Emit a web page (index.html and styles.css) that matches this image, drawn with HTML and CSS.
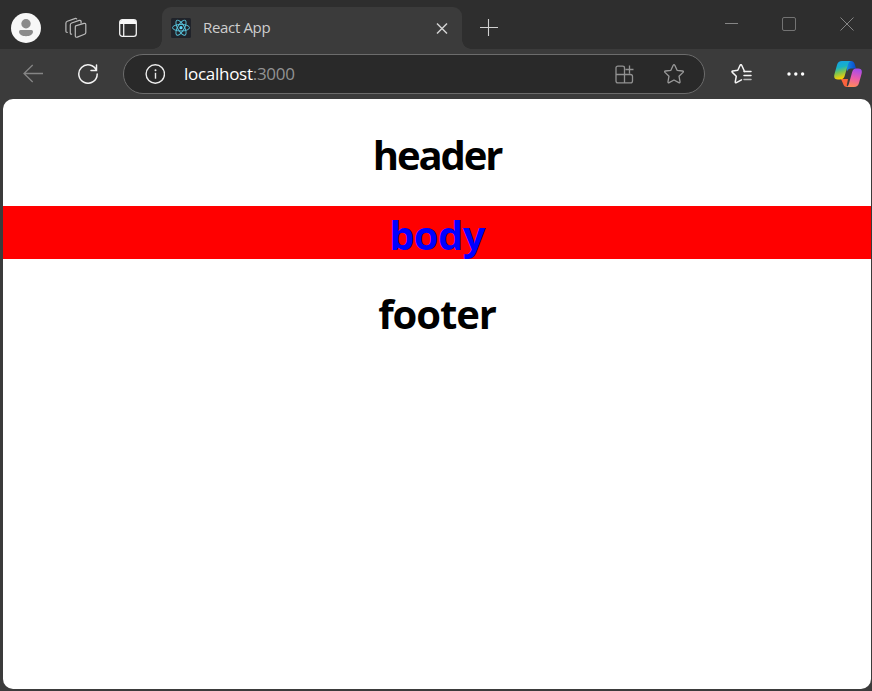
FILE: index.html
```html
<!DOCTYPE html>
<html lang="en">
<head>
<meta charset="utf-8">
<title>React App</title>
<link rel="stylesheet" href="styles.css">
</head>
<body>
<div class="window">
  <div class="tabstrip">
    <svg class="avatar" width="30" height="30" viewBox="0 0 30 30"><circle cx="15" cy="15" r="15" fill="#f7f7f7"/><circle cx="15" cy="10.700" r="4.700" fill="#8b8b8b"/><path d="M9.500 17h11q1.500 0 1.500 1.500c0 3-3 4.700-7 4.700s-7-1.700-7-4.700q0-1.500 1.500-1.500z" fill="#8b8b8b"/></svg>
    <svg class="workspaces" width="22" height="22" viewBox="0 0 22 22" fill="none" stroke="#bababa" stroke-width="1.200" stroke-linejoin="round" stroke-linecap="round"><path d="M10.600 8.800l8.400-2.400q1.800-.4 1.800 1.300v7.800q0 1.400-1.300 1.800l-7.200 2.800q-2 .6-2-1.300v-8.300q0-1.300.3-1.700z"/><path d="M6.600 17.200q-1.300.2-1.300-1.200V8q0-1.500 1.400-2l7.500-2.600q1.300-.4 1.900.7v2"/><path d="M2.200 15.400q-1.300 0-1.300-1.200V6.300q0-1.500 1.400-2l7.500-2.700q1.200-.4 1.900.3"/></svg>
    <svg class="vertical-tabs" width="18" height="18" viewBox="0 0 18 18"><rect x=".7" y=".7" width="16.600" height="16.600" rx="2.600" fill="none" stroke="#f2f2f2" stroke-width="1.300"/><path d="M1 5V3q0-2 2-2h12q2 0 2 2v2z" fill="#f8f8f8"/><path d="M4.700 5v12" stroke="#eee" stroke-width="1.300"/></svg>
    <div class="tab">
      <svg width="20" height="20" viewBox="0 0 20 20"><rect width="20" height="20" rx="1.500" fill="#20232a"/><g fill="none" stroke="#58c4dc" stroke-width=".95"><ellipse cx="10" cy="9.700" rx="8.500" ry="3.300"/><ellipse cx="10" cy="9.700" rx="8.500" ry="3.300" transform="rotate(60 10 9.700)"/><ellipse cx="10" cy="9.700" rx="8.500" ry="3.300" transform="rotate(120 10 9.700)"/></g><circle cx="10" cy="9.700" r="1.600" fill="#61dafb"/></svg>
      <span class="tab-title">React App</span>
      <svg width="12" height="12" viewBox="0 0 12 12" stroke="#d2d2d2" stroke-width="1.500"><path d="M1 1.500l10 10M11 1.500l-10 10"/></svg>
    </div>
    <svg class="new-tab" width="18" height="18" viewBox="0 0 18 18" stroke="#d0d0d0" stroke-width="1.100"><path d="M0 9.500h18M8.500 1v17"/></svg>
    <div class="controls">
      <svg width="13" height="14" viewBox="0 0 13 14"><path d="M0 6.500h13" stroke="#858585"/></svg>
      <svg width="14" height="14" viewBox="0 0 14 14"><rect x=".5" y=".5" width="13" height="13" rx="1.500" fill="none" stroke="#737373"/></svg>
      <svg width="14" height="14" viewBox="0 0 14 14"><path d="M.5.5l13 13M13.500.5l-13 13" stroke="#858585"/></svg>
    </div>
  </div>
  <div class="toolbar">
    <svg class="back" width="20" height="20" viewBox="0 0 20 20" fill="none" stroke="#858585" stroke-width="1.300"><path d="M20 9.500H1M9.700 1L1 9.500l8.700 8.500"/></svg>
    <svg class="reload" width="20" height="20" viewBox="0 0 20 20" fill="none" stroke="#f3f3f3" stroke-width="1.500" stroke-linecap="round"><path d="M18.500 6.500A9.200 9.200 0 1 0 19.200 10M18.500 1v5.500H13"/></svg>
    <div class="address">
      <svg class="info" width="20" height="20" viewBox="0 0 20 20"><circle cx="10.300" cy="10" r="9.200" fill="none" stroke="#ececec" stroke-width="1.400"/><path d="M10.500 8.800v5.900" stroke="#ececec" stroke-width="1.400"/><circle cx="10.500" cy="6.200" r="1" fill="#ececec"/></svg>
      <span class="url">localhost<span class="port">:3000</span></span>
      <svg class="apps" width="19" height="19" viewBox="0 0 19 19" fill="none" stroke="#919191" stroke-width="1.300"><path d="M9.500 9.500V3q0-1.900-1.900-1.900H3Q1 1.100 1 3v13q0 1.900 2 1.900h12.500q2 0 2-1.900v-4.600q0-1.900-2-1.900zM1 9.500h8.500v8.400M14.500.5v8M10.500 4.500h8"/></svg>
      <svg class="star" width="20" height="20" viewBox="0 0 20 20" fill="none" stroke="#9a9a9a" stroke-width="1.300" stroke-linejoin="round"><path d="M9.200 1.300q.8-1.300 1.600 0l2.300 5 5.400.7q1.500.3.500 1.400l-4 3.800 1 5.500q.1 1.500-1.200.9L10 16l-4.800 2.600q-1.300.6-1.200-.9l1-5.500-4-3.800Q0 7.300 1.500 7l5.400-.7z"/></svg>
    </div>
    <svg class="favorites" width="21" height="20" viewBox="0 0 21 20" fill="none" stroke="#f5f5f5" stroke-width="1.500" stroke-linejoin="round" stroke-linecap="round"><path d="M10.500 15.800l-5.100 2.800q-1.300.6-1.100-.9l1-5.500-4-3.800Q.4 7.300 1.800 7l5-.7 2.300-5q.8-1.300 1.600 0L13 6.300l.7 1.200"/><path d="M13 7.500h7M13 11.500h7"/><path d="M13 15.500h7" stroke="#b8b8b8"/></svg>
    <svg class="more" width="18" height="4" viewBox="0 0 18 4" fill="#fff"><circle cx="2" cy="2" r="1.700"/><circle cx="8.800" cy="2" r="1.700"/><circle cx="15.600" cy="2" r="1.700"/></svg>
    <svg class="copilot" width="28" height="26" viewBox="0 0 28 26"><defs><linearGradient id="left" x2=".25" y2="1"><stop stop-color="#169cec"/><stop offset=".4" stop-color="#18b2c5"/><stop offset=".65" stop-color="#79c453"/><stop offset="1" stop-color="#ffd000"/></linearGradient><linearGradient id="right" x1=".6" x2=".4" y2="1"><stop stop-color="#a34cee"/><stop offset=".5" stop-color="#e95bae"/><stop offset="1" stop-color="#ff8a58"/></linearGradient><linearGradient id="top"><stop stop-color="#168ce7"/><stop offset="1" stop-color="#0849ca"/></linearGradient></defs><path d="M12 0h5q3 0 4 4l1 3.500h-5q-3 0-4 3z" fill="url(#top)"/><path d="M7 18h7l-1 5q-1 3 2 3h-2q-3 0-4-3.500z" fill="#fa623d"/><path d="M8 0h9q-2 0-3 3.500l-3.500 12Q9.500 18.500 6 18.500H4Q-1 18.500.5 13L3 4Q4 0 8 0z" fill="url(#left)"/><path d="M20 26h-8q2 0 3-3.500l3-11Q19 7.500 22 7.500h2q5 0 3.500 5.500L25 22q-1 4-5 4z" fill="url(#right)"/></svg>
  </div>
  <main class="page">
    <h1 class="header-title">header</h1>
    <h1 class="body-title">body</h1>
    <h1 class="footer-title">footer</h1>
  </main>
</div>
</body>
</html>
```
FILE: styles.css
```css
* { box-sizing: border-box; }
body {
  margin: 0;
  background: #3b3b3b;
  font-family: "Open Sans", "Noto Sans", sans-serif;
}
svg { display: block; flex: none; }
.window {
  display: flex;
  flex-direction: column;
  width: 872px;
  height: 691px;
  padding-bottom: 2px;
  overflow: hidden;
}
.tabstrip {
  display: flex;
  align-items: center;
  height: 49px;
  padding: 7px 18px 0 11px;
  background: #2e2e2e;
}
.avatar { margin-right: 24px; }
.workspaces { margin-right: 32px; }
.vertical-tabs { margin-right: 25px; }
.tab {
  position: relative;
  display: flex;
  align-items: center;
  width: 300px;
  height: 42px;
  padding: 0 14px 0 9px;
  border-radius: 9px 9px 0 0;
  background: #3b3b3b;
}
.tab::before, .tab::after {
  content: "";
  position: absolute;
  bottom: 0;
  width: 9px;
  height: 9px;
}
.tab::before {
  left: -9px;
  background: radial-gradient(circle at 0 0, transparent 8.5px, #3b3b3b 9px);
}
.tab::after {
  right: -9px;
  background: radial-gradient(circle at 100% 0, transparent 8.5px, #3b3b3b 9px);
}
.tab-title {
  flex: 1;
  margin-left: 12px;
  padding-bottom: 2px;
  color: #cecece;
  font-size: 15px;
  letter-spacing: -0.33px;
}
.new-tab { margin: 0 auto 2px 18px; }
.controls {
  display: flex;
  gap: 44px;
  margin-bottom: 9px;
}
.toolbar {
  display: flex;
  align-items: center;
  height: 50px;
  padding: 0 10px 0 23px;
}
.back { margin-right: 35px; }
.reload { margin-right: 25px; }
.address {
  display: flex;
  align-items: center;
  width: 583px;
  height: 40px;
  padding: 0 20px 0 21px;
  border: 1px solid #6c6c6c;
  border-radius: 20px;
  background: #292929;
}
.url {
  flex: 1;
  margin-left: 19px;
  padding-bottom: 2px;
  color: #fff;
  font-size: 17px;
  letter-spacing: -0.28px;
}
.port { color: #929292; }
.apps { margin-right: 30px; }
.favorites { margin: 0 35px 0 26px; }
.more { margin-right: 29px; }
.page {
  flex: 1;
  margin: 0 1px 0 3px;
  padding-top: 30px;
  border-radius: 10px;
  background: #fff;
}
h1 {
  height: 53px;
  margin: 0;
  color: #000;
  font-size: 40px;
  text-align: center;
}
.header-title {
  margin-bottom: 24px;
  line-height: 51px;
  letter-spacing: -2.1px;
}
.body-title {
  margin-bottom: 27px;
  background: #f00;
  color: #00f;
  line-height: 57px;
  letter-spacing: -0.6px;
}
.footer-title {
  line-height: 55px;
  letter-spacing: -1.1px;
}
```
